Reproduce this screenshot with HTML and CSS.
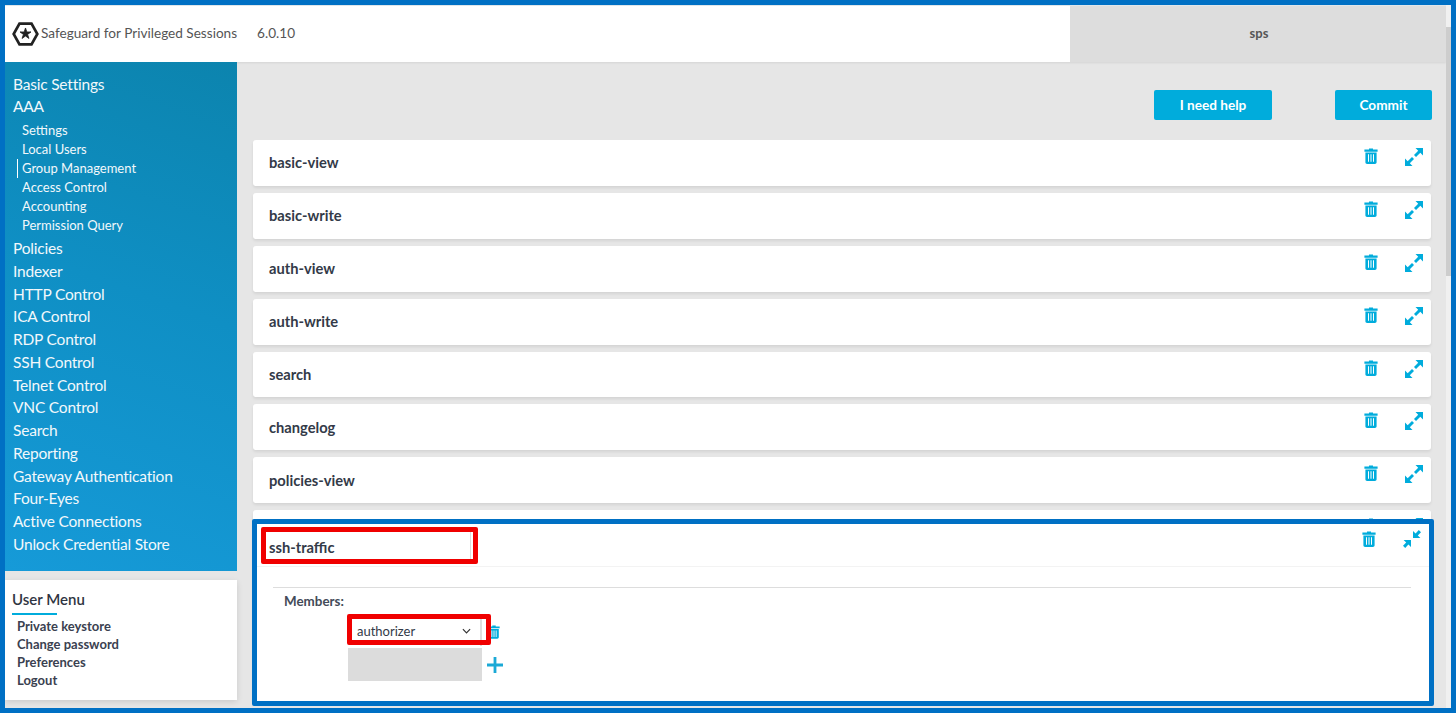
FILE: index.html
```html
<!DOCTYPE html>
<html lang="en">
<head>
  <meta charset="UTF-8" />
  <title>Safeguard for Privileged Sessions</title>
  <link rel="stylesheet" href="styles.css">
</head>
<body>
  <svg class="defs" width="0" height="0">
    <symbol id="trash" viewBox="0 0 14 16">
      <path d="M5 1.5V.4h4v1.1h4.6v2.2H.4V1.5zM1.4 4.4h11.2v9.8c0 1-.8 1.7-1.7 1.7H3.1c-1 0-1.7-.7-1.7-1.7zM4 6.2v7.6h1V6.2zm2.5 0v7.6h1V6.2zm2.5 0v7.6h1V6.2z" fill-rule="evenodd" />
    </symbol>
    <symbol id="expand" viewBox="0 0 18 18">
      <path d="M10.5 0H18v7.5l-2.7-2.7L11 9 9 7l4.2-4.3zM7.5 18H0v-7.5l2.7 2.7L7 9l2 2-4.2 4.3z" />
    </symbol>
    <symbol id="collapse" viewBox="0 0 18 18">
      <path d="M10 8V1l2.6 2.6L15.8 0 18 2.2l-3.2 3.2L17.4 8zM8 10v7l-2.6-2.6L2.2 18 0 15.8l3.2-3.2L.6 10z" />
    </symbol>
  </svg>

  <div class="page">
    <header class="topbar">
      <div class="brand">
        <svg class="logo" viewBox="0 0 26 24">
          <path d="M7.2 2h11.6L24.4 12l-5.6 10H7.2L1.6 12z" fill="none" stroke="#222" stroke-width="2.6" />
          <path d="M13 6.2l1.3 3.9 4-.1-3.3 2.4 1.3 3.9-3.3-2.4-3.3 2.4 1.3-3.9-3.3-2.4 4 .1z" fill="#222" stroke="#222" stroke-width=".8" />
        </svg>
        <span class="brand-name">Safeguard for Privileged Sessions</span>
        <span class="version">6.0.10</span>
      </div>
      <div class="hostname">sps</div>
    </header>

    <div class="layout">
      <aside class="side">
        <nav class="mainmenu">
          <a class="m1" href="#">Basic Settings</a>
          <a class="m1" href="#">AAA</a>
          <ul class="submenu">
            <li>Settings</li>
            <li>Local Users</li>
            <li class="current">Group Management</li>
            <li>Access Control</li>
            <li>Accounting</li>
            <li>Permission Query</li>
          </ul>
          <a class="m1" href="#">Policies</a>
          <a class="m1" href="#">Indexer</a>
          <a class="m1" href="#">HTTP Control</a>
          <a class="m1" href="#">ICA Control</a>
          <a class="m1" href="#">RDP Control</a>
          <a class="m1" href="#">SSH Control</a>
          <a class="m1" href="#">Telnet Control</a>
          <a class="m1" href="#">VNC Control</a>
          <a class="m1" href="#">Search</a>
          <a class="m1" href="#">Reporting</a>
          <a class="m1" href="#">Gateway Authentication</a>
          <a class="m1" href="#">Four-Eyes</a>
          <a class="m1" href="#">Active Connections</a>
          <a class="m1" href="#">Unlock Credential Store</a>
        </nav>
        <div class="usermenu">
          <h3>User Menu</h3>
          <ul>
            <li>Private keystore</li>
            <li>Change password</li>
            <li>Preferences</li>
            <li>Logout</li>
          </ul>
        </div>
      </aside>

      <main class="content">
        <div class="actions">
          <button class="btn btn-help">I need help</button>
          <button class="btn btn-commit">Commit</button>
        </div>

        <div class="groups">
          <div class="group"><b>basic-view</b><div class="tools"><svg class="ico-trash"><use href="#trash" /></svg><svg class="ico-size"><use href="#expand" /></svg></div></div>
          <div class="group"><b>basic-write</b><div class="tools"><svg class="ico-trash"><use href="#trash" /></svg><svg class="ico-size"><use href="#expand" /></svg></div></div>
          <div class="group"><b>auth-view</b><div class="tools"><svg class="ico-trash"><use href="#trash" /></svg><svg class="ico-size"><use href="#expand" /></svg></div></div>
          <div class="group"><b>auth-write</b><div class="tools"><svg class="ico-trash"><use href="#trash" /></svg><svg class="ico-size"><use href="#expand" /></svg></div></div>
          <div class="group"><b>search</b><div class="tools"><svg class="ico-trash"><use href="#trash" /></svg><svg class="ico-size"><use href="#expand" /></svg></div></div>
          <div class="group"><b>changelog</b><div class="tools"><svg class="ico-trash"><use href="#trash" /></svg><svg class="ico-size"><use href="#expand" /></svg></div></div>
          <div class="group"><b>policies-view</b><div class="tools"><svg class="ico-trash"><use href="#trash" /></svg><svg class="ico-size"><use href="#expand" /></svg></div></div>

          <!-- opened group, with the blue and red marks of the screenshot on top -->
          <div class="group group-open">
            <div class="peek"><div class="tools"><svg class="ico-trash"><use href="#trash" /></svg><svg class="ico-size"><use href="#expand" /></svg></div></div>
            <div class="group-head">
              <div class="name-input"><b>ssh-traffic</b></div>
              <div class="tools"><svg class="ico-trash"><use href="#trash" /></svg><svg class="ico-size"><use href="#collapse" /></svg></div>
            </div>
            <div class="group-body">
              <div class="members-label">Members:</div>
              <div class="member-row">
                <div class="select">authorizer<svg class="chev" viewBox="0 0 10 6"><path d="M1 1l4 4 4-4" fill="none" stroke="#333" stroke-width="1.3" /></svg></div>
                <svg class="ico-trash small"><use href="#trash" /></svg>
              </div>
              <div class="member-row">
                <div class="newmember"></div>
                <svg class="plus" viewBox="0 0 18 18"><path d="M7.6 1h2.8v6.6H17v2.8h-6.6V17H7.6v-6.6H1V7.6h6.6z" /></svg>
              </div>
            </div>
            <div class="mark-blue"></div>
            <div class="mark-red mark-name"></div>
            <div class="mark-red mark-select"></div>
          </div>
        </div>
      </main>
    </div>
    <div class="scrollbar"></div>
  </div>
</body>
</html>
```
FILE: styles.css
```css
* {
  margin: 0;
  padding: 0;
  box-sizing: border-box;
}

html, body {
  height: 100%;
  overflow: hidden;
  font-family: Lato, "Open Sans", sans-serif;
  color: #2f3542;
}

.defs {
  position: absolute;
}

.page {
  position: relative;
  height: 713px;
  border: 5px solid #0070c4;
  background: #e6e6e6;
  overflow: hidden;
}

/* Top bar */
.topbar {
  display: flex;
  height: 57px;
  margin-right: 5px;
  border-top: 1px solid #dfe6ea;
  box-shadow: 0 1px 2px rgba(0, 0, 0, 0.08);
}

.brand {
  flex: 0 0 1065px;
  display: flex;
  align-items: center;
  padding-left: 7px;
  background: #fff;
}

.logo {
  width: 27px;
  height: 26px;
}

.brand-name {
  margin: 0 0 3px 2px;
  font-size: 13.6px;
  color: #555;
}

.version {
  margin: 0 0 3px 20px;
  font-size: 13.6px;
  color: #555;
}

.hostname {
  flex: 1;
  display: flex;
  align-items: center;
  justify-content: center;
  padding: 0 0 3px 2px;
  background: #ddd;
  font-size: 13px;
  font-weight: 700;
  color: #555;
}

.scrollbar {
  position: absolute;
  top: 0;
  right: 0;
  width: 5px;
  height: 100%;
  background: #f0f0f0;
}

.scrollbar::after {
  content: "";
  display: block;
  height: 249px;
  margin-top: 22px;
  background: #cdcdcd;
}

/* Columns */
.layout {
  display: flex;
}

.side {
  flex: 0 0 232px;
}

.mainmenu {
  height: 509px;
  padding: 10.6px 8px 0;
  background: linear-gradient(20deg, #169ad8 0%, #0f8fc4 55%, #0c84ae 100%);
}

.m1 {
  display: block;
  height: 22.75px;
  line-height: 22.75px;
  font-size: 15.5px;
  color: #f2f8fb;
  text-decoration: none;
  letter-spacing: -0.2px;
}

.submenu {
  list-style: none;
  margin: 3px 0 2.1px;
}

.submenu li {
  height: 19px;
  line-height: 19px;
  padding-left: 9px;
  font-size: 13px;
  color: #f2f8fb;
}

.submenu .current {
  position: relative;
}

.submenu .current::before {
  content: "";
  position: absolute;
  left: 4px;
  top: 0;
  width: 1px;
  height: 19px;
  background: #fff;
}

.usermenu {
  height: 120px;
  margin-top: 9px;
  padding: 9px 7px 0;
  background: #fff;
  box-shadow: 0 2px 6px rgba(0, 0, 0, 0.12);
}

.usermenu h3 {
  width: 45px;
  font-size: 15px;
  font-weight: 600;
  white-space: nowrap;
  line-height: 20px;
  padding-bottom: 4px;
  border-bottom: 2px solid #00acdc;
}

.usermenu ul {
  list-style: none;
  margin-top: 2px;
  padding-left: 5px;
}

.usermenu li {
  height: 18px;
  line-height: 18px;
  font-size: 13px;
  font-weight: 700;
  color: #3a4150;
}

/* Main column */
.content {
  flex: 1;
  padding: 0 20px 0 16px;
}

.actions {
  display: flex;
  justify-content: flex-end;
  gap: 63px;
  margin-right: -1px;
  padding: 28px 0 20px;
}

.btn {
  height: 30px;
  border: 0;
  border-radius: 2px;
  background: #00acdc;
  color: #fff;
  font-family: inherit;
  font-size: 13.6px;
  font-weight: 700;
}

.btn-help {
  width: 118px;
}

.btn-commit {
  width: 97px;
}

.groups {
  display: flex;
  flex-direction: column;
  gap: 7px;
}

.group {
  position: relative;
  height: 45.9px;
  display: flex;
  align-items: center;
  justify-content: space-between;
  padding-left: 16px;
  background: #fff;
  border-radius: 3px;
  box-shadow: 0 2px 3px rgba(0, 0, 0, 0.08);
  font-size: 14.7px;
}

.group > b {
  margin-bottom: 1px;
}

.group b {
  color: #333a48;
}

.tools {
  align-self: flex-start;
  display: flex;
  align-items: center;
  gap: 27px;
  padding: 8px 8px 0 0;
}

.ico-trash {
  width: 14px;
  height: 16px;
  margin-top: -2px;
  fill: #00acdc;
}

.ico-trash.small {
  width: 12px;
  height: 14px;
  margin: 0 0 0 6px;
}

.ico-size {
  width: 18px;
  height: 18px;
  fill: #00acdc;
}

/* Opened group */
.group-open {
  display: block;
  height: 192px;
  padding: 0;
}

/* the tops of the icons of the row hidden behind the blue mark */
.peek {
  position: absolute;
  top: 0;
  right: 0;
  height: 9px;
  overflow: hidden;
}

.group-head {
  display: flex;
  justify-content: space-between;
  height: 57px;
  padding-left: 16px;
  border-bottom: 1px solid #f3f3f3;
}

.name-input {
  width: 202px;
  height: 28px;
  margin-top: 22px;
  border-right: 1px solid #ddd;
  line-height: 30px;
}

.group-head .tools {
  gap: 27px;
  padding: 20px 10px 0 0;
}

.group-head .ico-trash {
  margin-top: 0;
}

.group-body {
  margin: 20px 20px 0;
  border-top: 1px solid #ddd;
  padding: 5px 0 0 11px;
}

.members-label {
  font-size: 13.4px;
  font-weight: 700;
  line-height: 16px;
  color: #444b58;
}

.member-row {
  display: flex;
  align-items: center;
  margin: 8px 0 0 64px;
}

.member-row + .member-row {
  margin-top: 2px;
}

.select {
  display: flex;
  align-items: center;
  justify-content: space-between;
  width: 134px;
  height: 29px;
  padding: 0 9px 2px;
  border-right: 2px solid #ddd;
  font-size: 13px;
  color: #333a48;
}

.chev {
  width: 9px;
  height: 6px;
}

.newmember {
  width: 134px;
  height: 33px;
  background: #dcdcdc;
}

.plus {
  width: 18px;
  height: 18px;
  margin-left: 4px;
  fill: #1ba9d6;
}

/* Marks over the picture */
.mark-blue {
  position: absolute;
  left: -1px;
  top: 9px;
  width: 1182px;
  height: 187px;
  border: 5px solid #0070c4;
  border-radius: 2px;
}

.mark-red {
  position: absolute;
  border: 5px solid #f00000;
  border-radius: 2px;
}

.mark-name {
  left: 8px;
  top: 17px;
  width: 217px;
  height: 37px;
}

.mark-select {
  left: 94px;
  top: 104px;
  width: 144px;
  height: 31px;
}
```
